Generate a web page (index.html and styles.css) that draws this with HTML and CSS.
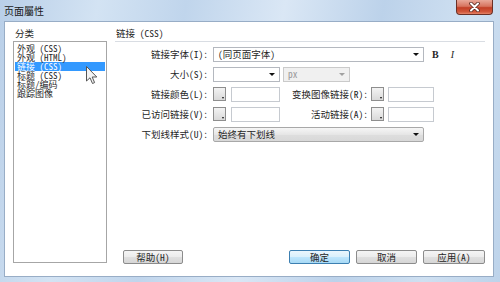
FILE: index.html
```html
<!DOCTYPE html>
<html>
<head>
<meta charset="utf-8">
<link rel="stylesheet" href="styles.css">
</head>
<body>
<div class="window">
  <div class="titlebar">
    <span class="title">页面屬性</span>
    <div class="close">
      <svg width="13" height="10" viewBox="0 0 13 10">
        <path d="M3 1.5 L10 8.5 M10 1.5 L3 8.5" stroke="#5a2a22" stroke-width="3.6" stroke-linecap="round"/>
        <path d="M3 1.5 L10 8.5 M10 1.5 L3 8.5" stroke="#ffffff" stroke-width="2" stroke-linecap="round"/>
      </svg>
    </div>
  </div>
  <div class="content">
    <div class="left">
      <div class="caption">分类</div>
      <ul class="list">
        <li>外观 (CSS)</li>
        <li>外观 (HTML)</li>
        <li class="sel">链接 (CSS)</li>
        <li>标题 (CSS)</li>
        <li>标题/编码</li>
        <li>跟踪图像</li>
      </ul>
    </div>
    <div class="right">
      <div class="heading">链接 (CSS)</div>
      <div class="form">
        <div class="row">
          <span class="lbl">链接字体(I):</span>
          <div class="select sel-font"><span>(同页面字体)</span><i class="arrow"></i></div>
          <span class="fmt-b">B</span>
          <span class="fmt-i">I</span>
        </div>
        <div class="row">
          <span class="lbl">大小(S):</span>
          <div class="select sel-size"><span></span><i class="arrow"></i></div>
          <div class="select sel-unit"><span>px</span><i class="arrow"></i></div>
        </div>
        <div class="row">
          <span class="lbl">链接颜色(L):</span>
          <div class="swatch"><i class="tri"></i></div>
          <div class="input"></div>
          <span class="lbl2">变换图像链接(R):</span>
          <div class="swatch"><i class="tri"></i></div>
          <div class="input input-sm"></div>
        </div>
        <div class="row">
          <span class="lbl">已访问链接(V):</span>
          <div class="swatch"><i class="tri"></i></div>
          <div class="input"></div>
          <span class="lbl2">活动链接(A):</span>
          <div class="swatch"><i class="tri"></i></div>
          <div class="input input-sm"></div>
        </div>
        <div class="row">
          <span class="lbl">下划线样式(U):</span>
          <div class="select sel-under"><span>始终有下划线</span><i class="arrow"></i></div>
        </div>
      </div>
      <div class="buttons">
        <div class="btn btn-help">帮助(H)</div>
        <div class="btn btn-ok">确定</div>
        <div class="btn">取消</div>
        <div class="btn btn-apply">应用(A)</div>
      </div>
    </div>
  </div>
  <svg class="cursor" width="12" height="19" viewBox="0 0 12 19">
    <path d="M0.5 0.5 L0.5 15 L4 11.8 L6.5 17.5 L8.6 16.6 L6.2 11 L10.8 11 Z" fill="#f4f4f4" stroke="#555" stroke-width="1"/>
  </svg>
</div>
</body>
</html>
```
FILE: styles.css
```css
html, body {
  margin: 0;
  padding: 0;
}
body {
  width: 500px;
  height: 282px;
  overflow: hidden;
  font-family: "Noto Sans Mono CJK SC", "DejaVu Sans Mono", "Noto Sans CJK SC", monospace;
  font-size: 9.5px;
  color: #262626;
}
.window {
  position: relative;
  width: 500px;
  height: 282px;
  display: flex;
  flex-direction: column;
  background: linear-gradient(100deg, #b9cfe8 0%, #d3e3f3 18%, #c0d5ec 34%, #dae7f5 52%, #bcd2ea 70%, #cfe0f1 86%, #bdd3ea 100%);
  box-sizing: border-box;
}
.titlebar {
  height: 21px;
  display: flex;
  align-items: flex-start;
  justify-content: space-between;
}
.title {
  padding-left: 4px;
  line-height: 21px;
  font-size: 10px;
  color: #1a1a1a;
}
.close {
  width: 37px;
  height: 15px;
  margin-right: 7px;
  box-sizing: border-box;
  border: 1px solid #6b3026;
  border-top: none;
  border-radius: 0 0 4px 4px;
  background: linear-gradient(#e9a899 0%, #d7745f 45%, #c23f26 55%, #d2583c 85%, #e5866a 100%);
  display: flex;
  align-items: center;
  justify-content: center;
}
.content {
  height: 256px;
  margin: 0 6px 5px 4px;
  box-sizing: border-box;
  background: #ffffff;
  border: 1px solid #98adc6;
  display: flex;
  gap: 8px;
  padding: 0 8px 12px 8px;
}
.left {
  width: 94px;
  display: flex;
  flex-direction: column;
  padding-bottom: 1px;
}
.caption, .heading {
  padding-top: 4px;
  line-height: 14px;
  height: 19px;
  box-sizing: border-box;
  padding-left: 2px;
}
.list {
  flex: 1;
  margin: 0;
  list-style: none;
  border: 1px solid #a6a6a6;
  padding: 2px 1px;
}
.list li {
  height: 9px;
  line-height: 9px;
  font-size: 9px;
  padding-left: 2px;
  white-space: nowrap;
}
.list li.sel {
  background: #3399ff;
  color: #ffffff;
}
.right {
  flex: 1;
  display: flex;
  flex-direction: column;
}
.heading {
  height: 20px;
  border-bottom: 1px solid #d9dde3;
  padding-left: 1px;
}
.form {
  margin-top: 2px;
  display: flex;
  flex-direction: column;
}
.row {
  height: 20px;
  display: flex;
  align-items: center;
}
.lbl {
  width: 96px;
  box-sizing: border-box;
  padding-right: 3px;
  text-align: right;
  white-space: nowrap;
}
.lbl2 {
  width: 89px;
  box-sizing: border-box;
  padding-right: 1px;
  text-align: right;
  white-space: nowrap;
}
.select {
  height: 15px;
  box-sizing: border-box;
  border: 1px solid #b4b8bf;
  background: #ffffff;
  display: flex;
  align-items: center;
  justify-content: space-between;
  padding: 0 4px 0 4px;
  margin-left: 2px;
  white-space: nowrap;
}
.arrow {
  width: 0;
  height: 0;
  border-left: 3px solid transparent;
  border-right: 3px solid transparent;
  border-top: 3px solid #111;
}
.sel-font {
  width: 211px;
}
.sel-size {
  width: 67px;
}
.sel-unit {
  width: 67px;
  margin-left: 3px;
  background: #f0f0f0;
  border-color: #cacaca;
  color: #9a9a9a;
}
.sel-unit .arrow {
  border-top-color: #a0a0a0;
}
.sel-under {
  width: 211px;
  border-color: #a8a8a8;
  border-radius: 2px;
  background: linear-gradient(#f6f6f6, #e6e6e6 50%, #dedede 51%, #d8d8d8);
}
.fmt-b {
  margin-left: 8px;
  font-family: "Liberation Serif", serif;
  font-weight: bold;
  font-size: 10px;
}
.fmt-i {
  margin-left: 12px;
  font-family: "Liberation Serif", serif;
  font-style: italic;
  font-size: 10px;
}
.swatch {
  width: 13px;
  height: 14px;
  margin-left: 2px;
  box-sizing: border-box;
  border: 1px solid #8e8e8e;
  background: linear-gradient(#f3f3f3, #d9d9d9);
  display: flex;
  align-items: flex-end;
  justify-content: flex-end;
  padding: 0 1px 1px 0;
}
.tri {
  width: 0;
  height: 0;
  border-left: 1.5px solid transparent;
  border-right: 1.5px solid transparent;
  border-top: 2px solid #111;
}
.input {
  width: 49px;
  height: 15px;
  margin-left: 5px;
  box-sizing: border-box;
  border: 1px solid #c6cad0;
  background: #ffffff;
}
.input-sm {
  width: 46px;
  margin-left: 4px;
}
.buttons {
  margin-top: auto;
  display: flex;
  gap: 6px;
}
.btn {
  width: 61px;
  height: 14px;
  box-sizing: border-box;
  border: 1px solid #8c8c8c;
  border-radius: 2px;
  background: linear-gradient(#f5f5f5 0%, #ececec 50%, #e0e0e0 51%, #d6d6d6 100%);
  display: flex;
  align-items: center;
  justify-content: center;
  line-height: 12px;
}
.btn-help {
  width: 60px;
  margin-left: 8px;
}
.btn-ok {
  margin-left: auto;
  border-color: #3c7fb1;
  background: linear-gradient(#eaf6fd 0%, #d9f0fc 50%, #bee6fd 51%, #a7d9f5 100%);
}
.btn-apply {
  width: 62px;
}
.cursor {
  position: absolute;
  left: 86px;
  top: 66px;
}
```
